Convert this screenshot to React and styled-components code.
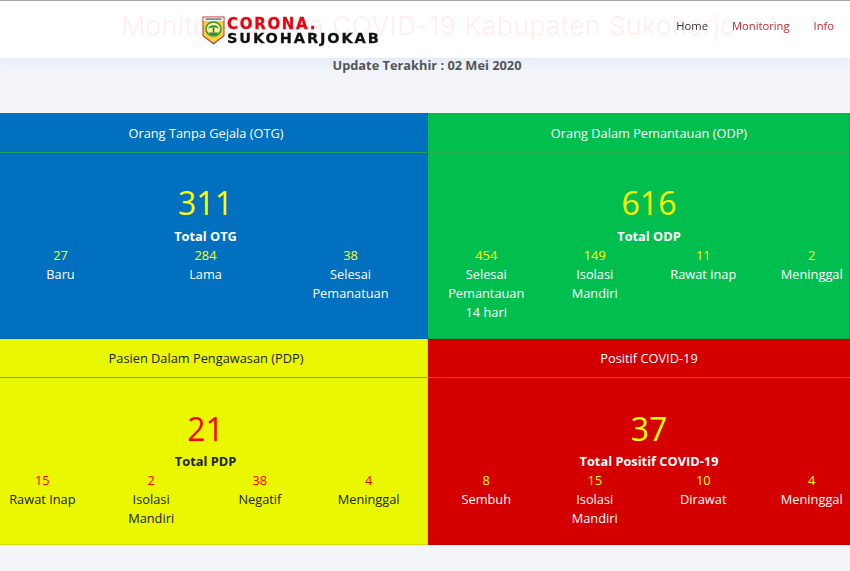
import React from 'react';
import styled, { createGlobalStyle } from 'styled-components';

const GlobalStyle = createGlobalStyle`
	html, body {
		margin: 0;
		padding: 0;
		height: 100%;
		overflow: hidden;
		background: #f3f5fa;
		font-family: "Open Sans", "Liberation Sans", sans-serif;
	}
`;

const panels = [
	{
		title: 'Orang Tanpa Gejala (OTG)', total: '311', caption: 'Total OTG',
		bg: '#0070bf', text: '#fff', num: '#ffff00', side: 'left', tall: true,
		items: [['27', 'Baru'], ['284', 'Lama'], ['38', 'Selesai Pemanatuan']],
	},
	{
		title: 'Orang Dalam Pemantauan (ODP)', total: '616', caption: 'Total ODP',
		bg: '#00bf4f', text: '#fff', num: '#ffff00', side: 'right', tall: true,
		items: [['454', 'Selesai Pemantauan 14 hari'], ['149', 'Isolasi Mandiri'], ['11', 'Rawat inap'], ['2', 'Meninggal']],
	},
	{
		title: 'Pasien Dalam Pengawasan (PDP)', total: '21', caption: 'Total PDP',
		bg: '#e9f700', text: '#222', num: '#ff0000', side: 'left',
		items: [['15', 'Rawat Inap'], ['2', 'Isolasi Mandiri'], ['38', 'Negatif'], ['4', 'Meninggal']],
	},
	{
		title: 'Positif COVID-19', total: '37', caption: 'Total Positif COVID-19',
		bg: '#d40000', text: '#fff', num: '#ffff00', side: 'right',
		items: [['8', 'Sembuh'], ['15', 'Isolasi Mandiri'], ['10', 'Dirawat'], ['4', 'Meninggal']],
	},
];

const Header = styled.header`
	position: fixed;
	z-index: 10;
	top: 0;
	left: 0;
	right: 0;
	height: 57px;
	display: flex;
	align-items: center;
	justify-content: space-between;
	padding-left: 202px;
	padding-right: 16px;
	background: rgba(255, 255, 255, 0.93);
	border-top: 1px solid #aaa;
	box-shadow: 0 2px 15px rgba(25, 119, 204, 0.1);
`;

const Logo = styled.a`
	display: flex;
	align-items: center;
	gap: 2px;
	margin-top: 2px;
`;

const LogoText = styled.div`
	display: flex;
	flex-direction: column;
	font-family: "DejaVu Sans", sans-serif;
	font-weight: 700;
	line-height: 14px;
	-webkit-text-stroke: 0.3px currentColor;
`;

const LogoTop = styled.span`
	color: #e30613;
	font-size: 15px;
	letter-spacing: 1.7px;
`;

const LogoBottom = styled.span`
	color: #111;
	font-size: 14.5px;
	letter-spacing: 1.9px;
`;

const Nav = styled.nav`
	display: flex;
	gap: 24px;
	margin-top: -9px;
`;

const NavLink = styled.a`
	font-size: 11.2px;
	color: ${({ $active }) => ($active ? '#333' : '#c9252d')};
`;

const Intro = styled.div`
	height: 113px;
	text-align: center;
	box-sizing: border-box;
	padding-top: 1px;
`;

const PageTitle = styled.h1`
	margin: 0;
	padding-left: 8px;
	font-family: "Inter", "Noto Sans", sans-serif;
	font-weight: 300;
	font-size: 26px;
	line-height: 50px;
	letter-spacing: 0.7px;
	color: #f00;
	white-space: nowrap;
`;

const Updated = styled.h2`
	margin: 5px 0 0;
	padding-left: 4px;
	font-size: 12.8px;
	line-height: 18px;
	font-weight: 700;
	color: #555;
`;

const Grid = styled.div`
	display: grid;
	grid-template-columns: 428px 422px;
	grid-template-rows: 226px 206px;
`;

const Panel = styled.section`
	background: ${({ $bg }) => $bg};
	color: ${({ $text }) => $text};
	overflow: hidden;
	box-sizing: border-box;
	box-shadow: inset -1px -1px 0 rgba(0, 0, 0, 0.1);
`;

const PanelTitle = styled.div`
	height: ${({ $tall }) => ($tall ? '39px' : '38px')};
	border-bottom: 1px solid rgba(50, 170, 60, 0.8);
	font-size: 12.8px;
	display: flex;
	align-items: center;
	justify-content: center;
	margin-right: ${({ $side }) => ($side === 'left' ? '1px' : '0')};
`;

const PanelTitleText = styled.span`
	margin-left: ${({ $side }) => ($side === 'left' ? '-15px' : '20px')};
`;

const Body = styled.div`
	margin-left: ${({ $side }) => ($side === 'left' ? '-12px' : '4px')};
	margin-right: ${({ $side }) => ($side === 'left' ? '5px' : '-16px')};
	padding-top: ${({ $tall }) => ($tall ? '28px' : '29px')};
	text-align: center;
`;

const Total = styled.div`
	font-size: 32px;
	line-height: 44px;
	color: ${({ $num }) => $num};
`;

const Caption = styled.div`
	font-size: 12.8px;
	font-weight: 700;
	line-height: 19px;
	margin-top: ${({ $tall }) => ($tall ? '2px' : '1px')};
`;

const Items = styled.div`
	display: grid;
	grid-template-columns: repeat(${({ $count }) => $count}, 1fr);
`;

const Item = styled.div`
	font-size: 12.8px;
	line-height: 19px;
	padding: 0 15px;
`;

const ItemValue = styled.div`
	color: ${({ $num }) => $num};
`;

const Shield = () => (
	<svg width="23" height="29" viewBox="0 0 23 29">
		<path d="M0.5 0.5H22.5V20L11.5 28.5L0.5 20Z" fill="#b5342c" />
		<path d="M1.5 1.5H21.5V19.5L11.5 27L1.5 19.5Z" fill="#f4d23c" />
		<rect x="1.5" y="1.5" width="20" height="3.5" fill="#f4f4f0" />
		<rect x="3.5" y="2.5" width="16" height="1.2" fill="#555" />
		<ellipse cx="11.5" cy="13" rx="7.5" ry="7" fill="#f7f29a" stroke="#3d8b3d" strokeWidth="1.5" />
		<path d="M6 12.5C8 8 15 8 17 12.5C15 11 8 11 6 12.5Z" fill="#2c8a3a" />
		<rect x="10.7" y="11.5" width="1.6" height="5" fill="#7a5a2e" />
		<path d="M6.5 16.5H16.5L14.5 19H8.5Z" fill="#2c8a3a" />
	</svg>
);

const App = () => (
	<>
		<GlobalStyle />
		<Header>
			<Logo>
				<Shield />
				<LogoText>
					<LogoTop>CORONA.</LogoTop>
					<LogoBottom>SUKOHARJOKAB</LogoBottom>
				</LogoText>
			</Logo>
			<Nav>
				<NavLink $active>Home</NavLink>
				<NavLink>Monitoring</NavLink>
				<NavLink>Info</NavLink>
			</Nav>
		</Header>
		<Intro>
			<PageTitle>Monitoring Data COVID-19 Kabupaten Sukoharjo</PageTitle>
			<Updated>Update Terakhir : 02 Mei 2020</Updated>
		</Intro>
		<Grid>
			{panels.map((panel) => (
				<Panel key={panel.title} $bg={panel.bg} $text={panel.text}>
					<PanelTitle $side={panel.side} $tall={panel.tall}>
						<PanelTitleText $side={panel.side}>{panel.title}</PanelTitleText>
					</PanelTitle>
					<Body $side={panel.side} $tall={panel.tall}>
						<Total $num={panel.num}>{panel.total}</Total>
						<Caption $tall={panel.tall}>{panel.caption}</Caption>
						<Items $count={panel.items.length}>
							{panel.items.map(([value, label]) => (
								<Item key={label}>
									<ItemValue $num={panel.num}>{value}</ItemValue>
									{label}
								</Item>
							))}
						</Items>
					</Body>
				</Panel>
			))}
		</Grid>
	</>
);

export default App;
